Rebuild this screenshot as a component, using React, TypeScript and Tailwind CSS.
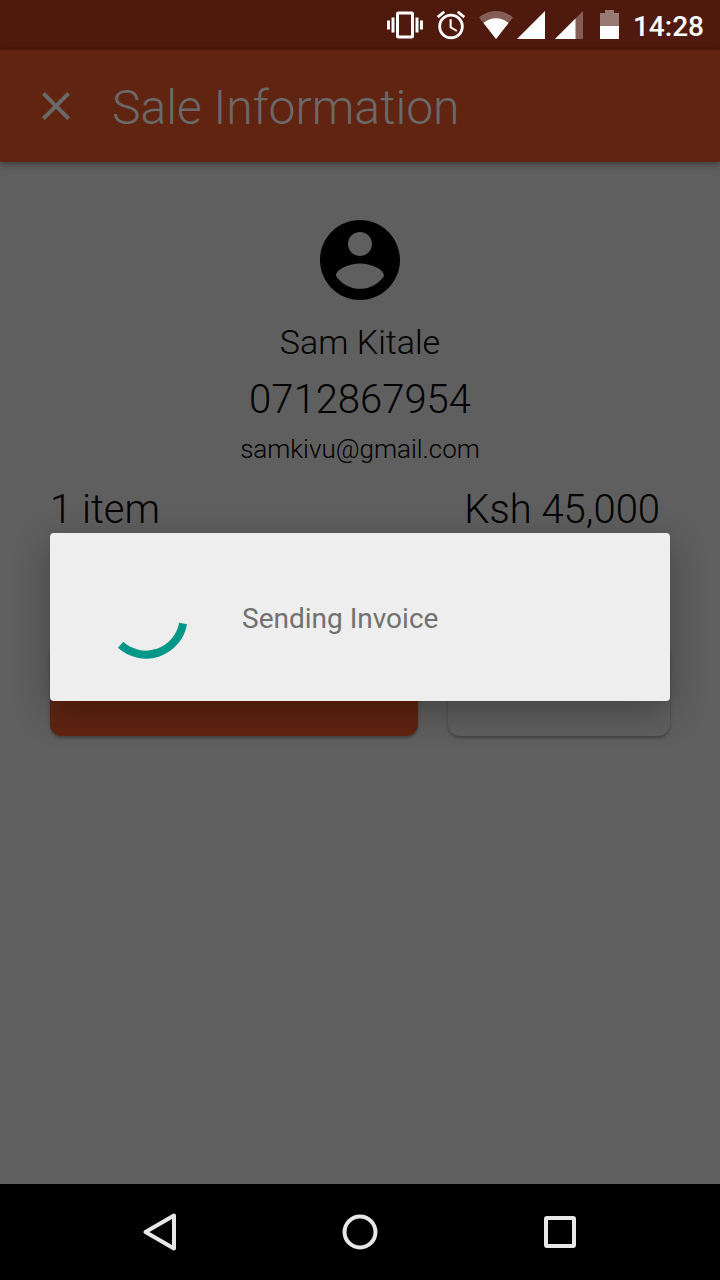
import React from "react";
import { MdAlarm, MdClose, MdVibration } from "react-icons/md";

function StatusBar() {
  return (
    <div className="flex h-[50px] items-center justify-end bg-[#50190e] pr-4 text-white">
      <MdVibration size={36} aria-hidden="true" />
      <MdAlarm size={34} className="ml-[11px]" aria-hidden="true" />
      <svg width="34" height="28" viewBox="0 0 34 28" className="ml-[11px]" aria-hidden="true">
        <path d="M0 6.5C4.500 2.500 10.500 0 17 0s12.500 2.500 17 6.500L17 28z" fill="#fff" fillOpacity=".3" />
        <path d="M4.500 12C8 9 12.300 7.300 17 7.300S26 9 29.500 12L17 28z" fill="#fff" />
      </svg>
      <svg width="28" height="28" viewBox="0 0 28 28" className="ml-1" aria-hidden="true">
        <path d="M0 28H28V0z" fill="#fff" />
      </svg>
      <svg width="28" height="28" viewBox="0 0 28 28" className="ml-[10px]" aria-hidden="true">
        <path d="M0 28H28V0z" fill="#fff" fillOpacity=".3" />
        <path d="M0 28H20.500V7.500z" fill="#fff" />
      </svg>
      <svg width="19" height="30" viewBox="0 0 19 30" className="ml-[17px]" aria-hidden="true">
        <path d="M5 0h9v3h5v13H0V3h5z" fill="#fff" fillOpacity=".42" />
        <path d="M0 16h19v13H0z" fill="#fff" />
      </svg>
      <span className="ml-[14px] pt-1 text-[28px] leading-8 font-medium">14:28</span>
    </div>
  );
}

function SaleHeader() {
  return (
    <header className="relative flex h-28 items-center bg-[#602411] px-8 text-[#6a6a6a] shadow-[0_2px_8px_rgba(0,0,0,0.4)]">
      <button type="button" aria-label="Close">
        <MdClose size={48} />
      </button>
      <h1 className="ml-8 pt-1 text-[48px] leading-[56px] font-light">Sale Information</h1>
    </header>
  );
}

function Avatar() {
  return (
    <svg width="96" height="96" viewBox="0 0 24 24" fill="currentColor" aria-hidden="true">
      <path d="M12 2C6.480 2 2 6.480 2 12s4.480 10 10 10 10-4.480 10-10S17.520 2 12 2zm0 3c1.660 0 3 1.340 3 3s-1.340 3-3 3-3-1.340-3-3 1.340-3 3-3zm0 14.200c-2.500 0-4.710-1.280-6-3.220.030-1.990 4-3.080 6-3.080 1.990 0 5.970 1.090 6 3.080-1.290 1.940-3.500 3.220-6 3.220z" />
    </svg>
  );
}

function SaleDetails() {
  return (
    <main className="px-[50px] pt-[50px] font-light text-black">
      <div className="flex flex-col items-center gap-2">
        <Avatar />
        <p className="text-[34px] leading-[52px]">Sam Kitale</p>
        <p className="text-[40px] leading-[48px]">0712867954</p>
        <p className="text-[26px] leading-[34px]">samkivu@gmail.com</p>
      </div>
      <div className="mt-4 flex justify-between pr-[10px] text-[40px] leading-[56px]">
        <span>1 item</span>
        <span>Ksh 45,000</span>
      </div>
      <div className="mt-[102px] flex gap-[30px]">
        <button
          type="button"
          aria-label="Send"
          className="h-24 flex-1 rounded-xl bg-[#602411] shadow-[0_2px_3px_rgba(0,0,0,0.3)]"
        />
        <button
          type="button"
          aria-label="Cancel"
          className="h-24 w-[222px] rounded-xl bg-[#5f5f5f] shadow-[0_2px_3px_rgba(0,0,0,0.3)]"
        />
      </div>
    </main>
  );
}

function ProgressDialog() {
  return (
    <div className="absolute inset-0 flex items-center px-[50px]">
      <div
        role="dialog"
        aria-label="Sending Invoice"
        className="flex h-[168px] w-full items-center rounded-[4px] bg-[#eee] pl-12 shadow-[0_10px_36px_rgba(0,0,0,0.3)]"
      >
        <svg width="96" height="96" viewBox="0 0 96 96" fill="none" aria-hidden="true">
          <path d="M22.600 75.800A37.700 37.700 0 0 0 85.100 54.500" stroke="#009688" strokeWidth="8" />
        </svg>
        <p className="ml-12 pt-1 text-[28px] leading-9 text-[#717171]">Sending Invoice</p>
      </div>
    </div>
  );
}

function NavigationBar() {
  return (
    <nav className="flex h-24 items-center justify-center gap-[104px] bg-black text-[#e8e8e8]">
      <button type="button" aria-label="Back">
        <svg width="96" height="96" viewBox="0 0 96 96" fill="none" stroke="currentColor" strokeWidth="4" strokeLinejoin="round">
          <path d="M33.500 48L62 31.500v33z" />
        </svg>
      </button>
      <button type="button" aria-label="Home">
        <svg width="96" height="96" viewBox="0 0 96 96" fill="none" stroke="currentColor" strokeWidth="4">
          <circle cx="48" cy="48" r="15.500" />
        </svg>
      </button>
      <button type="button" aria-label="Recent apps">
        <svg width="96" height="96" viewBox="0 0 96 96" fill="none" stroke="currentColor" strokeWidth="4">
          <rect x="34" y="34" width="28" height="28" rx="1" />
        </svg>
      </button>
    </nav>
  );
}

export default function App() {
  return (
    <div className="flex min-h-screen flex-col bg-[#5f5f5f] font-[Roboto,sans-serif]">
      <StatusBar />
      <div className="relative flex-1">
        <SaleHeader />
        <SaleDetails />
        <ProgressDialog />
      </div>
      <NavigationBar />
    </div>
  );
}
